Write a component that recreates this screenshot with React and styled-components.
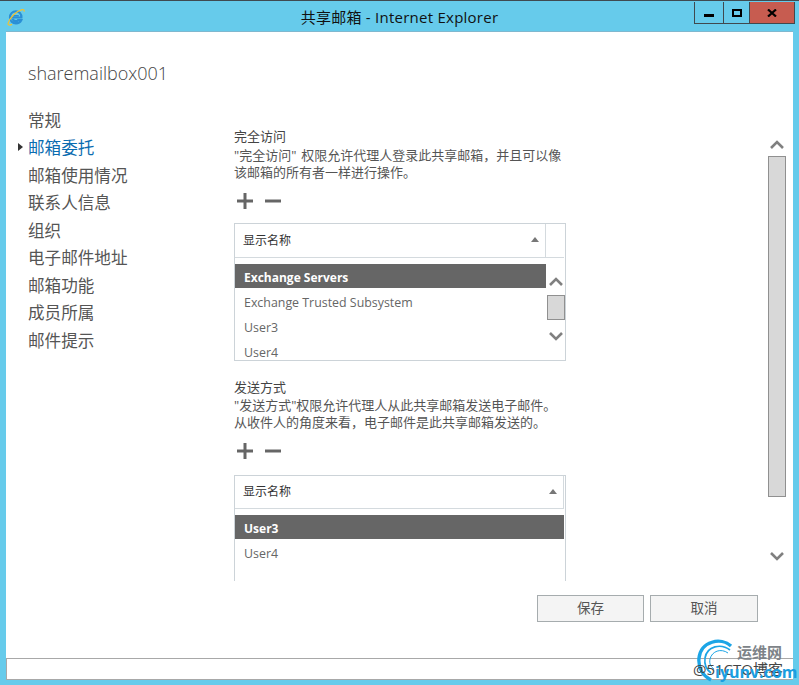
import React from 'react';
import styled, { createGlobalStyle } from 'styled-components';

const CJK = '"Open Sans", "Noto Sans CJK SC", "Noto Sans", sans-serif';

const Global = createGlobalStyle`
  html, body { margin: 0; padding: 0; background: #66cbeb; }
  * { box-sizing: border-box; }
  #root { width: 799px; height: 685px; }
`;

const Frame = styled.div`
  position: relative;
  width: 799px;
  height: 685px;
  background: #66cbeb;
  border-top: 1px solid #3f4a50;
  display: flex;
  flex-direction: column;
  overflow: hidden;
  font-family: ${CJK};
`;

const TitleBar = styled.div`
  height: 31px;
  flex: none;
  display: flex;
  justify-content: space-between;
  padding-left: 7px;
  position: relative;
`;

const Title = styled.div`
  position: absolute;
  left: 0;
  right: 0;
  top: 6px;
  text-align: center;
  font-size: 15px;
  line-height: 20px;
  color: #111;
  letter-spacing: 0.25px;
`;

const LogoBox = styled.div`
  padding-top: 7px;
`;

const WinButtons = styled.div`
  display: flex;
  height: 22px;
  margin-right: 4px;
  border: 1px solid #40494e;
  border-top: 0;
  margin-top: 1px;
`;

const WinBtn = styled.div`
  width: ${p => p.$w}px;
  background: ${p => p.$bg || 'transparent'};
  border-left: ${p => (p.$first ? '0' : '1px solid #40494e')};
  display: flex;
  align-items: center;
  justify-content: center;
`;

const Client = styled.div`
  flex: none;
  margin: 0 6px;
  height: 626px;
  background: #fff;
  display: flex;
  flex-direction: column;
  box-shadow: 0 -1px 0 #7fb8cf;
`;

const Heading = styled.h1`
  margin: 0;
  padding: 28px 0 0 22px;
  height: 75px;
  font-size: 18px;
  font-weight: 300;
  line-height: 26px;
  color: #444;
  font-family: "Open Sans", sans-serif;
`;

const Body = styled.div`
  flex: 1;
  display: flex;
  min-height: 0;
`;

const Nav = styled.nav`
  width: 228px;
  flex: none;
  padding: 0.5px 0 0 22px;
`;

const NavItem = styled.div`
  position: relative;
  height: 27.5px;
  font-size: 16.6px;
  line-height: 26px;
  color: ${p => (p.$active ? '#0a6cb0' : '#555')};
`;

const Caret = styled.span`
  position: absolute;
  left: -10px;
  top: 8px;
  width: 0;
  height: 0;
  border-left: 5px solid #333;
  border-top: 4.5px solid transparent;
  border-bottom: 4.5px solid transparent;
`;

const Main = styled.div`
  width: 332px;
  flex: none;
  padding-top: 21px;
  height: 474px;
  overflow: hidden;
`;

const Section = styled.section`
  margin-bottom: ${p => p.$mb || 0}px;
`;

const Label = styled.div`
  font-size: 13px;
  line-height: 17px;
  margin-bottom: ${p => p.$mb}px;
  color: #444;
`;

const Desc = styled.div`
  font-size: 13px;
  line-height: 17px;
  color: #555;
  white-space: nowrap;
  word-spacing: 1.5px;
`;

const Tools = styled.div`
  height: 40px;
  margin-bottom: ${p => p.$mb}px;
  display: flex;
  align-items: center;
  gap: 12px;
  padding: 0 0 0 3px;
`;

const ListBox = styled.div`
  position: relative;
  width: 332px;
  height: ${p => p.$h}px;
  border: 1px solid #ccd3d8;
  border-bottom: ${p => (p.$open ? '0' : '1px solid #ccd3d8')};
`;

const ListHead = styled.div`
  height: ${p => p.$h}px;
  margin-right: 1px;
  border-bottom: 1px solid #d4dade;
  display: flex;
  align-items: center;
`;

const HeadCell = styled.div`
  flex: 1;
  height: 100%;
  display: flex;
  align-items: center;
  justify-content: space-between;
  padding: 0 6px 2px 8px;
  font-size: 12px;
  color: #333;
  border-right: ${p => (p.$edge ? '1px solid #d4dade' : '0')};
`;

const SpareCell = styled.div`
  width: 19px;
  height: 100%;
  border-left: 1px solid #d4dade;
`;

const SortUp = styled.span`
  width: 0;
  height: 0;
  border-left: 4px solid transparent;
  border-right: 4px solid transparent;
  border-bottom: 5px solid #777;
`;

const Rows = styled.div`
  padding-top: 6px;
  width: ${p => (p.$narrow ? 311 : 329)}px;
`;

const Row = styled.div`
  height: ${p => (p.$sel ? 24 : 25)}px;
  padding-left: 9px;
  font-size: ${p => (p.$sel ? 12 : 12.4)}px;
  line-height: ${p => (p.$sel ? 27 : 30)}px;
  background: ${p => (p.$sel ? '#666' : 'transparent')};
  color: ${p => (p.$sel ? '#fff' : '#666')};
  font-weight: ${p => (p.$sel ? 700 : 400)};
  white-space: nowrap;
`;

const Clip = styled.div`
  height: ${p => p.$h}px;
  overflow: hidden;
`;

const InnerBar = styled.div`
  position: absolute;
  right: 0;
  top: 53px;
  width: 19px;
  display: flex;
  flex-direction: column;
  align-items: center;
`;

const Thumb = styled.div`
  width: 18px;
  height: 25px;
  background: #d8d8d8;
  border: 1px solid #909090;
  margin: 9px 0 12px;
`;

const OuterBar = styled.div`
  width: 20px;
  margin-left: 201px;
  flex: none;
  display: flex;
  flex-direction: column;
  align-items: center;
  padding-top: 33px;
`;

const OuterThumb = styled.div`
  width: 18px;
  height: 341px;
  background: #d8d8d8;
  border: 1px solid #909090;
  margin: 7px 0 55px;
`;

const Footer = styled.div`
  height: 77px;
  flex: none;
  display: flex;
  justify-content: flex-end;
  align-items: flex-start;
  gap: 6px;
  padding: 14px 35px 0 0;
`;

const Button = styled.button`
  width: ${p => p.$w}px;
  height: 27px;
  padding: 0 0 3px;
  background: #f4f4f4;
  border: 1px solid #a6acae;
  font: 13.5px ${CJK};
  color: #555;
`;

const StatusBar = styled.div`
  flex: none;
  height: 22px;
  margin: 0 6px;
  background: #fff;
  border: 1px solid #a8a8a8;
  border-width: 1px 0 1px 1px;
`;

const Watermark = styled.div`
  position: absolute;
  left: 697px;
  top: 637px;
  width: 102px;
  height: 48px;
`;

const WmName = styled.span`
  position: absolute;
  left: 40px;
  top: 6px;
  font-size: 15px;
  line-height: 16px;
  font-weight: 700;
  color: #7d8388;
`;

const WmOverlap = styled.span`
  position: absolute;
  left: -4px;
  top: 22px;
  font-size: 15px;
  line-height: 18px;
  color: #444;
  white-space: nowrap;
`;

const WmDomain = styled.span`
  position: absolute;
  left: 18px;
  top: 23px;
  font-size: 16px;
  line-height: 22px;
  font-weight: 700;
  color: #1b9ee0;
`;

const Chevron = ({ up }) => (
  <svg width="14" height="9" viewBox="0 0 14 9" style={{ display: 'block' }}>
    <path d={up ? 'M1 8 L7 2 L13 8' : 'M1 1 L7 7 L13 1'} fill="none" stroke="#808080" strokeWidth="2.6" />
  </svg>
);

const Plus = () => (
  <svg width="16" height="16" viewBox="0 0 16 16" style={{ display: 'block' }}>
    <path d="M0 8 H16 M8 0 V16" stroke="#666" strokeWidth="3" />
  </svg>
);

const Minus = () => (
  <svg width="16" height="16" viewBox="0 0 16 16" style={{ display: 'block' }}>
    <path d="M0 8 H16" stroke="#666" strokeWidth="3" />
  </svg>
);

const IeLogo = () => (
  <svg width="18" height="18" viewBox="0 0 18 18" style={{ display: 'block' }}>
    <path d="M3 9.5 H14.4 C14.6 5.8 12 3.4 9 3.4 C5.6 3.4 3 6 3 9.5 C3 13 5.6 15.4 9 15.4 C11.4 15.4 13.2 14.2 14.2 12.2 H11 C10.4 12.9 9.8 13.2 9 13.2 C7.4 13.2 6 12 5.8 10.9" fill="none" stroke="#2a8fd6" strokeWidth="2.2" />
    <path d="M5.6 7.8 H11.8" stroke="#2a8fd6" strokeWidth="1.6" />
    <path d="M1 15.6 C2.6 10 9 3 15 1.6 C16.6 1.3 17.6 2 17 3.6" fill="none" stroke="#f2c230" strokeWidth="1.2" />
    <path d="M1 15.6 C1 17.4 3 17.4 5 16.4" fill="none" stroke="#f2c230" strokeWidth="1.2" />
  </svg>
);

const Swirl = () => (
  <svg width="38" height="48" viewBox="0 0 38 48" style={{ position: 'absolute', left: 0, top: 0 }}>
    <path d="M34 8 C24 -1 4 3 2 20 C1 30 6 38 14 42" fill="none" stroke="#1ca5e6" strokeWidth="3.4" />
    <path d="M33 12 C24 5 10 8 8 20 C7 27 10 32 14 35" fill="none" stroke="#1ca5e6" strokeWidth="1.6" />
    <path d="M31 15 C24 10 15 13 13 21 C12 26 14 29 17 31" fill="none" stroke="#1ca5e6" strokeWidth="1" />
  </svg>
);

const Access = [
  { name: 'Exchange Servers', sel: true },
  { name: 'Exchange Trusted Subsystem' },
  { name: 'User3' },
  { name: 'User4' },
];

const Send = [{ name: 'User3', sel: true }, { name: 'User4' }];

const NavItems = ['常规', '邮箱委托', '邮箱使用情况', '联系人信息', '组织', '电子邮件地址', '邮箱功能', '成员所属', '邮件提示'];

export default function App() {
  return (
    <Frame>
      <Global />
      <TitleBar>
        <LogoBox><IeLogo /></LogoBox>
        <Title>共享邮箱 - Internet Explorer</Title>
        <WinButtons>
          <WinBtn $w={28} $first>
            <svg width="10" height="3" viewBox="0 0 10 3" style={{ marginTop: 6 }}><rect width="10" height="3" fill="#000" /></svg>
          </WinBtn>
          <WinBtn $w={26}>
            <svg width="10" height="8" viewBox="0 0 10 8"><rect x="1" y="1" width="8" height="6" fill="none" stroke="#000" strokeWidth="2" /></svg>
          </WinBtn>
          <WinBtn $w={45} $bg="#c75c50">
            <svg width="10" height="8" viewBox="0 0 10 8"><path d="M1 0.5 L9 7.5 M9 0.5 L1 7.5" stroke="#000" strokeWidth="2.2" /></svg>
          </WinBtn>
        </WinButtons>
      </TitleBar>
      <Client>
        <Heading>sharemailbox001</Heading>
        <Body>
          <Nav>
            {NavItems.map((n, i) => (
              <NavItem key={n} $active={i === 1}>
                {i === 1 && <Caret />}
                {n}
              </NavItem>
            ))}
          </Nav>
          <Main>
            <Section $mb={18}>
              <Label $mb={2}>完全访问</Label>
              <Desc>"完全访问" 权限允许代理人登录此共享邮箱，并且可以像</Desc>
              <Desc>该邮箱的所有者一样进行操作。</Desc>
              <Tools $mb={2}><Plus /><Minus /></Tools>
              <ListBox $h={138}>
                <ListHead $h={34}>
                  <HeadCell>显示名称<SortUp /></HeadCell>
                  <SpareCell />
                </ListHead>
                <Clip $h={102}>
                  <Rows $narrow>
                    {Access.map(r => <Row key={r.name} $sel={r.sel}>{r.name}</Row>)}
                  </Rows>
                </Clip>
                <InnerBar>
                  <Chevron up />
                  <Thumb />
                  <Chevron />
                </InnerBar>
              </ListBox>
            </Section>
            <Section>
              <Label $mb={1}>发送方式</Label>
              <Desc>"发送方式"权限允许代理人从此共享邮箱发送电子邮件。</Desc>
              <Desc>从收件人的角度来看，电子邮件是此共享邮箱发送的。</Desc>
              <Tools $mb={4}><Plus /><Minus /></Tools>
              <ListBox $h={106} $open>
                <ListHead $h={33}>
                  <HeadCell $edge>显示名称<SortUp /></HeadCell>
                </ListHead>
                <Rows>
                  {Send.map(r => <Row key={r.name} $sel={r.sel}>{r.name}</Row>)}
                </Rows>
              </ListBox>
            </Section>
          </Main>
          <OuterBar>
            <Chevron up />
            <OuterThumb />
            <Chevron />
          </OuterBar>
        </Body>
        <Footer>
          <Button $w={107}>保存</Button>
          <Button $w={108}>取消</Button>
        </Footer>
      </Client>
      <StatusBar />
      <Watermark>
        <Swirl />
        <WmName>运维网</WmName>
        <WmOverlap>@51CTO博客</WmOverlap>
        <WmDomain>iyunv.com</WmDomain>
      </Watermark>
    </Frame>
  );
}
